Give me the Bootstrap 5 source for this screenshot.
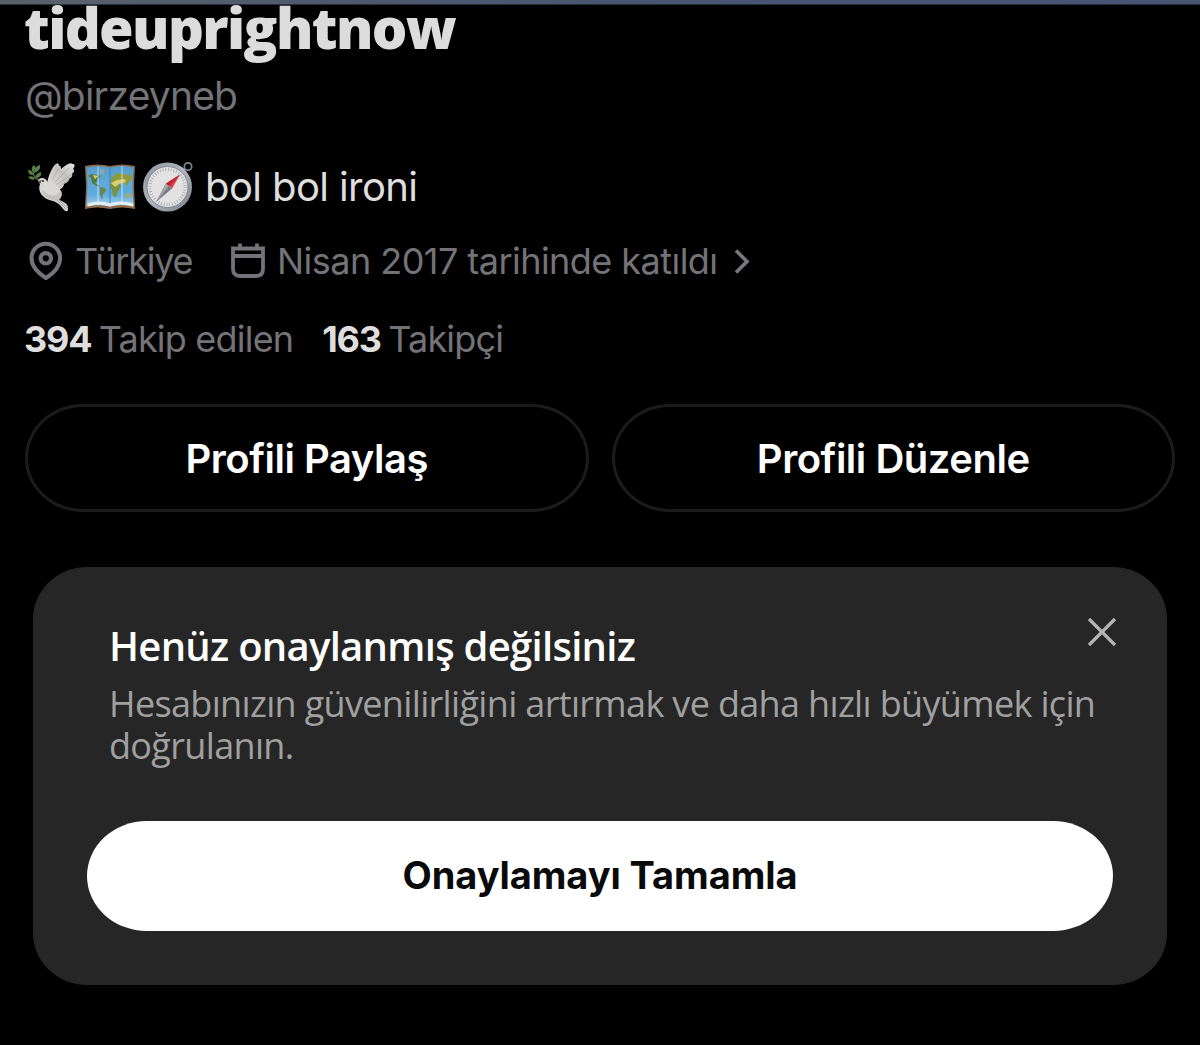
<!DOCTYPE html>
<html lang="tr" data-bs-theme="dark">
<head>
<meta charset="utf-8">
<meta name="viewport" content="width=device-width, initial-scale=1">
<title>tideuprightnow</title>
<link href="https://cdn.jsdelivr.net/npm/bootstrap@5.3.0/dist/css/bootstrap.min.css" rel="stylesheet">
<style>
body{background:#000;color:#fff;font-family:Inter,"Liberation Sans",sans-serif}
.banner-edge{height:5px;background:linear-gradient(to bottom,transparent 4px,#283040 4px),linear-gradient(90deg,#59616a,#4b586d 35%,#465574 65%,#465472)}
.profile{padding:0 25px}
.profile-name{font:800 56px/45px "Open Sans",sans-serif;letter-spacing:-1.63px;color:#dcdcdc;margin:0 0 0 -1px;white-space:nowrap}
.handle{font-size:39px;line-height:50px;letter-spacing:-.8px;margin-top:21px;color:#737378}
.bio{font-size:40px;line-height:56px;height:56px;margin-top:38px;letter-spacing:-.6px;color:#dedede}
.bio svg{margin-right:9px}
.meta{font-size:36px;line-height:44px;color:#737378;white-space:nowrap}
.meta-info{margin-top:23px}
.meta-info svg{flex:none}
.place{letter-spacing:-1.2px;margin-left:10px;width:156px;padding-top:1px}
.joined{letter-spacing:-.54px;margin-left:12px;padding-top:1px}
.counts{margin-top:34px;letter-spacing:-.8px}
.counts>span{margin-left:-1px}
.counts b{color:#dedede;font-weight:700;letter-spacing:-1.2px;margin-right:-2px}
.counts .followers{margin-left:29px}
.actions{margin-top:43px;gap:23px}
.btn-outline{height:108px;border:3px solid #1b1b1c;border-radius:58px/54px;color:#fff;font-size:40px;font-weight:570;padding:1px 0 0;letter-spacing:-.48px}
.verify{margin:55px 33px 0;height:418px;border-radius:54px/52px;background:#262626;padding:57px 54px 0;position:relative}
.verify h2{font:600 40px/44px "Open Sans",sans-serif;letter-spacing:-.72px;margin:0 0 15px 22px}
.verify p{font:400 36px/41.5px "Open Sans",sans-serif;letter-spacing:-.66px;color:#a0a0a0;margin:0 -20px 55px 22px}
.btn-verify{height:110px;border-radius:60px/55px;background:#fff;color:#0a0a0a;font-size:38px;font-weight:700;padding:0 0 2px;letter-spacing:-.08px}
.btn-dismiss{position:absolute;right:50px;top:50px;padding:0;line-height:0;border:0}
</style>
</head>
<body>
<div class="banner-edge"></div>
<main>
<section class="profile">
  <h1 class="profile-name">tideuprightnow</h1>
  <div class="handle">@birzeyneb</div>
  <div class="bio d-flex">
    <svg width="171" height="56" viewBox="0 0 171 56" aria-hidden="true">
      <defs>
        <linearGradient id="wing" x1="0" x2="1" y1="1" y2="0"><stop stop-color="#e6e5e3"/><stop offset=".6" stop-color="#c4c2bf"/><stop offset="1" stop-color="#e4e3e1"/></linearGradient>
        <linearGradient id="rim" x2="1" y2="1"><stop stop-color="#8d949f"/><stop offset=".5" stop-color="#b1b6be"/><stop offset="1" stop-color="#767d89"/></linearGradient>
        <linearGradient id="sea" x2="0" y2="1"><stop stop-color="#559dcd"/><stop offset=".7" stop-color="#65afe0"/><stop offset="1" stop-color="#c4deea"/></linearGradient>
      </defs>
      <!-- dove with olive branch -->
      <path d="M14 21Q8 20 8 10" fill="none" stroke="#5d7c3b" stroke-width="1.200"/>
      <path d="M8 13q-3-4 1-7 3 3-1 7zM9 14q0-7 6-8 1 6-6 8zM10 19q1-5 6-6 1 6-6 6zM8 16q-5 0-5-5 5 0 5 5zM10 20q-4 2-7-2 5-2 7 2z" fill="#568047"/>
      <path d="M22 25C23 17 28 6 31 5q3-2 3 2 2-1 2 3c6-5 9-7 12-5 3 0 1 4 0 5 2 1 1 3-1 5 1 2-1 4-3 5 0 3-3 4-5 5 0 3-3 5-7 7z" fill="url(#wing)"/>
      <path d="m27 21 7-12M30 23 44 9M31 26l16-11M33 28l11-7" stroke="#9a9894" stroke-width=".8" opacity=".65"/>
      <path d="M13 22c1-4 7-4 9 0 2 4 6 5 11 7 5 3 5 8 1 12 6 2 10 5 9 9q0 4-4 1c-3-4-5-7-11-9C18 40 12 33 15 25z" fill="#dad8d5"/>
      <path d="M17 31c0 6 5 11 17 10 3-3 3-6 1-9-3 6-11 6-18-1z" fill="#aaa8a5" opacity=".45"/>
      <path d="m13 22 4-1-2 4z" fill="#66524c"/><circle cx="18" cy="22" r="1" fill="#29231e"/>
      <path d="m32 41 9 9m-6-8 8 7" stroke="#9b9996"/>
      <!-- folded world map -->
      <path d="M60 7q13-3 25 0 12-3 25 0l-1 19 1 24q-13-3-25 0-13-3-25 0l1-23z" fill="#8d6b4a"/>
      <path d="M61.500 8.500q12-3 23.500 0 12-3 23.500 0l-1 18 1 21q-12-3-23.500 0-12-3-23.500 0l1-21z" fill="url(#sea)"/>
      <path d="M62 28h23v19q-12-3-23 0zM85 28h23v19q-12-3-23 0z" fill="#4aa2dd" opacity=".23"/>
      <path d="m63 17 3-2 6 1 4 1-3 3-1 3-2 1 5 3-2 1-6-4-1-5z" fill="#547b42"/>
      <path d="m75 10 5 1-2 5-3-2z" fill="#8fa9a5"/>
      <path d="m75 28 5 1 1 3-3 3-1 6-2-6z" fill="#69874a"/>
      <path d="m87 18 5-4 6 1 8 1 2 3-4 4-2 4-3-3-5-1-5 1-4-1z" fill="#8f9a3c"/>
      <path d="m85 25 5-2 5 2 1 3-3 4-2 6-3-1-1-6-2-2z" fill="#799243"/>
      <path d="m101 35 4-1 1 3-3 2-3-1z" fill="#b0a862"/>
      <path d="m86 24 6-3 8-1 1 3-7 2-4 3zM68 16l5 1-3 3z" fill="#dbcd6f"/>
      <path d="M73 7.500v39M97 7v39" stroke="#eaf8ff" opacity=".35" stroke-width="2"/>
      <path d="M85 8v40" stroke="#357ba8" opacity=".75"/>
      <path d="M63 46q11-4 22 0 11-4 23 0" fill="none" stroke="#e0edf3" stroke-width="3"/>
      <!-- compass -->
      <circle cx="163" cy="7.500" r="3.700" fill="none" stroke="#7b8792" stroke-width="1.700"/>
      <path d="m156 11 3-2 2 4" fill="#929aa4"/>
      <circle cx="142.500" cy="28" r="24.500" fill="url(#rim)"/>
      <circle cx="142.500" cy="28" r="20.500" fill="#e2e2e2" stroke="#7f8690"/>
      <circle cx="142.500" cy="28" r="17.500" fill="none" stroke="#a5a5a5" stroke-width="3" stroke-dasharray=".8 1.950"/>
      <path d="m155 15.500-8 14-6-5z" fill="#dc3b42"/>
      <path d="m147 29.500-16 13.500 10-18.500z" fill="#777a80"/>
      <path d="m144 27-13 16 10-18.500z" fill="#a2a5a9"/>
      <path d="m155 15.500-11 11.500-3-2.500z" fill="#bd2431"/>
    </svg>
    <span>bol bol ironi</span>
  </div>
  <div class="meta meta-info d-flex align-items-center">
    <svg width="40" height="44" viewBox="0 0 40 44" fill="none" stroke="#737378" stroke-width="4" aria-hidden="true"><path d="M21 39C13 34 6.500 27.500 6.500 19a14.300 14.300 0 0 1 28.600 0C35 27.500 29 34 21 39z" stroke-linejoin="round"/><circle cx="20.800" cy="19.300" r="5.200" stroke-width="4.200"/></svg>
    <span class="place">Türkiye</span>
    <svg width="34" height="44" viewBox="0 0 34 44" fill="none" stroke="#737378" stroke-width="3.800" aria-hidden="true"><path d="M2 9.500h30V30q0 7-7 7H9q-7 0-7-7z"/><path d="M2 17h30M9 4.500V9M26 4.500V9"/></svg>
    <span class="joined">Nisan 2017 tarihinde katıldı</span>
    <svg class="ms-3" width="18" height="44" viewBox="0 0 18 44" fill="none" stroke="#77777c" stroke-width="3.600" aria-hidden="true"><path d="m2 11.500 11 11-11 11"/></svg>
  </div>
  <div class="meta counts d-flex">
    <span><b>394</b> Takip edilen</span><span class="followers"><b>163</b> Takipçi</span>
  </div>
  <div class="actions d-flex">
    <button class="btn btn-outline flex-fill w-50" type="button">Profili Paylaş</button>
    <button class="btn btn-outline flex-fill w-50" type="button">Profili Düzenle</button>
  </div>
</section>
<section class="verify">
  <h2>Henüz onaylanmış değilsiniz</h2>
  <p>Hesabınızın güvenilirliğini artırmak ve daha hızlı büyümek için doğrulanın.</p>
  <button class="btn btn-verify w-100" type="button">Onaylamayı Tamamla</button>
  <button class="btn btn-dismiss" type="button" aria-label="Kapat"><svg width="30" height="30" viewBox="0 0 30 30" fill="none" stroke="#b4b4b4" stroke-width="3.200"><path d="m2 2 26 26M28 2 2 28"/></svg></button>
</section>
</main>
</body>
</html>
